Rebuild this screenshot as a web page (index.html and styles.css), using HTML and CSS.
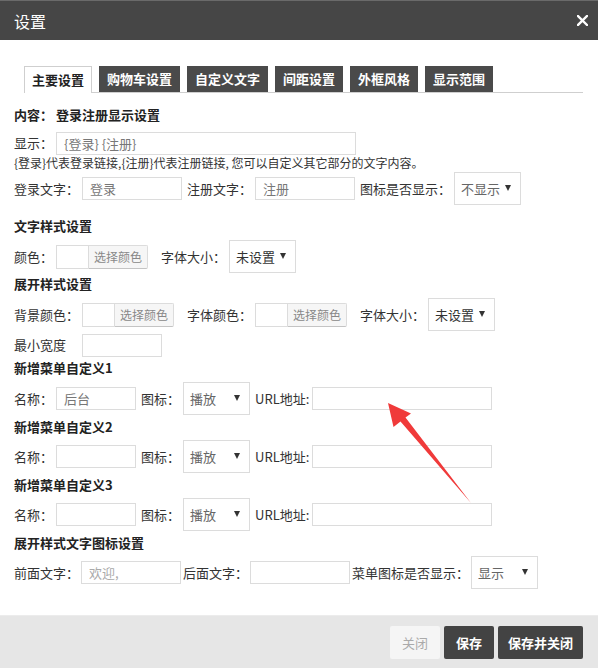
FILE: index.html
```html
<!DOCTYPE html>
<html lang="zh-CN">
<head>
  <meta charset="UTF-8" />
  <meta name="viewport" content="width=device-width, initial-scale=1.0" />
  <title>设置</title>
  <link rel="stylesheet" href="styles.css">
</head>
<body>

  <div class="dialog">
    <div class="dialog-head">
      <span class="dialog-title">设置</span>
      <svg class="close-x" width="11" height="11" viewBox="0 0 11 11">
        <path d="M1 1 L10 10 M10 1 L1 10" stroke="#fff" stroke-width="2.4" stroke-linecap="square" />
      </svg>
    </div>

    <div class="dialog-body">
      <ul class="tabs">
        <li class="tab active">主要设置</li>
        <li class="tab">购物车设置</li>
        <li class="tab">自定义文字</li>
        <li class="tab">间距设置</li>
        <li class="tab">外框风格</li>
        <li class="tab">显示范围</li>
      </ul>

      <div class="panel">
        <div class="sec-title first">内容： 登录注册显示设置</div>
        <div class="row short r-show">
          <label>显示：</label>
          <input class="field w300" type="text" value="{登录} {注册}" />
        </div>
        <div class="help">{登录}代表登录链接,{注册}代表注册链接, 您可以自定义其它部分的文字内容。</div>
        <div class="row r-login">
          <label>登录文字：</label>
          <input class="field w100" type="text" value="登录" />
          <label>注册文字：</label>
          <input class="field w100" type="text" value="注册" />
          <label>图标是否显示：</label>
          <div class="select"><span>不显示</span></div>
        </div>

        <div class="sec-title s-text">文字样式设置</div>
        <div class="row">
          <label>颜色：</label>
          <div class="color-pick"><span class="swatch"></span><span class="pick-btn">选择颜色</span></div>
          <label>字体大小：</label>
          <div class="select dark"><span>未设置</span></div>
        </div>

        <div class="sec-title s-open">展开样式设置</div>
        <div class="row">
          <label>背景颜色：</label>
          <div class="color-pick"><span class="swatch"></span><span class="pick-btn">选择颜色</span></div>
          <label>字体颜色：</label>
          <div class="color-pick"><span class="swatch"></span><span class="pick-btn">选择颜色</span></div>
          <label>字体大小：</label>
          <div class="select dark"><span>未设置</span></div>
        </div>
        <div class="row short r-min">
          <label>最小宽度</label>
          <input class="field w80 ml" type="text" value="" />
        </div>

        <div class="sec-title s-menu1">新增菜单自定义1</div>
        <div class="row">
          <label>名称：</label>
          <input class="field w80" type="text" value="后台" />
          <label>图标：</label>
          <div class="select"><span>播放</span></div>
          <label>URL地址:</label>
          <input class="field w180" type="text" value="" />
        </div>

        <div class="sec-title">新增菜单自定义2</div>
        <div class="row r-menu">
          <label>名称：</label>
          <input class="field w80" type="text" value="" />
          <label>图标：</label>
          <div class="select"><span>播放</span></div>
          <label>URL地址:</label>
          <input class="field w180" type="text" value="" />
        </div>

        <div class="sec-title">新增菜单自定义3</div>
        <div class="row r-menu">
          <label>名称：</label>
          <input class="field w80" type="text" value="" />
          <label>图标：</label>
          <div class="select"><span>播放</span></div>
          <label>URL地址:</label>
          <input class="field w180" type="text" value="" />
        </div>

        <div class="sec-title">展开样式文字图标设置</div>
        <div class="row tight r-menu">
          <label>前面文字：</label>
          <input class="field w100" type="text" placeholder="欢迎," />
          <label>后面文字：</label>
          <input class="field w100" type="text" value="" />
          <label>菜单图标是否显示：</label>
          <div class="select"><span>显示</span></div>
        </div>
      </div>

      <!-- annotation arrow pointing at the first URL field -->
      <svg class="mark-arrow" width="598" height="668" viewBox="0 0 598 668">
        <polygon points="388,403 411,413.5 405.5,417.5 471,503 400.5,421.5 393.5,427" fill="#f03a3a" />
      </svg>
    </div>

    <div class="dialog-foot">
      <button class="btn light">关闭</button>
      <button class="btn">保存</button>
      <button class="btn wide">保存并关闭</button>
    </div>
  </div>

</body>
</html>
```

FILE: styles.css
```css
* {
  box-sizing: border-box;
}

body {
  margin: 0;
  font-family: "Noto Sans CJK SC", "Noto Sans", sans-serif;
  font-size: 13px;
  color: #333;
  background: #fff;
}

.dialog {
  width: 598px;
  height: 668px;
  display: flex;
  flex-direction: column;
  position: relative;
  overflow: hidden;
}

.dialog-head {
  height: 40px;
  background: #464646;
  border-top: 1px solid #6a6a6a;
  display: flex;
  align-items: center;
  justify-content: space-between;
  padding: 0 10px 0 14px;
}

.dialog-title {
  color: #fff;
  font-size: 16px;
  line-height: 20px;
}

.close-x {
  display: block;
}

.dialog-body {
  flex: 1;
}

/* tabs */
.tabs {
  list-style: none;
  margin: 26px 15px 0 24px;
  padding: 0;
  display: flex;
  gap: 7px;
  border-bottom: 1px solid #cfcfcf;
  height: 27px;
}

.tab {
  height: 26px;
  line-height: 26px;
  padding: 0 8px;
  background: #4a4a4a;
  color: #fff;
  font-weight: bold;
}

.tab.active {
  background: #fff;
  color: #222;
  border: 1px solid #cfcfcf;
  border-bottom: none;
  height: 27px;
  padding: 0 7px;
}

/* form panel */
.panel {
  padding: 0 14px;
}

.sec-title {
  height: 20px;
  line-height: 20px;
  font-weight: bold;
  color: #222;
  margin-top: 2px;
}

.sec-title.first { margin-top: 12px; }
.sec-title.s-text { margin-top: 11px; }
.sec-title.s-open { margin-top: 1px; }
.sec-title.s-menu1 { margin-top: 1px; }

.row {
  display: flex;
  align-items: center;
  height: 33px;
  margin-top: 4px;
}

.row.short { height: 24px; }
.row.r-show { margin-top: 6px; }
.row.r-login { margin-top: 1px; }
.row.r-min { margin-top: 2px; }
.row.r-menu { margin-top: 3px; }

.row label {
  white-space: nowrap;
  line-height: 20px;
  margin-right: 3px;
}

.row .field {
  margin-right: 5px;
}

.row.tight label,
.row.tight .field {
  margin-right: 2px;
}

.help {
  font-size: 12px;
  line-height: 16px;
  color: #333;
  white-space: nowrap;
}

.field {
  height: 23px;
  border: 1px solid #dcdcdc;
  padding: 0 7px;
  font-family: inherit;
  font-size: 13px;
  color: #777;
  background: #fff;
  outline: none;
}

.field::placeholder {
  color: #aaa;
}

.w80 { width: 80px; }
.w100 { width: 100px; }
.w180 { width: 180px; }
.w300 { width: 300px; }
.ml { margin-left: 13px; }

/* fake select box */
.select {
  width: 67px;
  height: 33px;
  border: 1px solid #dcdcdc;
  display: flex;
  align-items: center;
  justify-content: space-between;
  padding: 0 9px 0 6px;
  color: #666;
  margin-right: 5px;
}

.select.dark {
  color: #333;
}

.select::after {
  content: "";
  width: 0;
  height: 0;
  border-left: 3px solid transparent;
  border-right: 3px solid transparent;
  border-top: 6px solid #333;
  margin-top: -2px;
}

/* color picker */
.color-pick {
  display: flex;
  height: 24px;
  margin-right: 13px;
}

.swatch {
  width: 32px;
  border: 1px solid #dcdcdc;
  border-right: none;
  background: #fff;
}

.pick-btn {
  width: 60px;
  border: 1px solid #dcdcdc;
  border-bottom-color: #c4c4c4;
  background: #f6f6f6;
  color: #888;
  font-size: 12px;
  line-height: 21px;
  text-align: center;
  border-radius: 0 2px 2px 0;
}

.mark-arrow {
  position: absolute;
  left: 0;
  top: 0;
  pointer-events: none;
}

/* footer */
.dialog-foot {
  height: 53px;
  background: #e6e6e6;
  border-top: 1px solid #ececec;
  display: flex;
  justify-content: flex-end;
  align-items: flex-start;
  gap: 4px;
  padding: 10px 15px 0 0;
}

.btn {
  height: 33px;
  padding: 0 12px;
  border: none;
  border-radius: 2px;
  background: #434343;
  color: #fff;
  font-family: inherit;
  font-size: 13px;
  font-weight: bold;
  cursor: pointer;
}

.btn.light {
  background: #f5f5f5;
  color: #aaa;
  font-weight: normal;
}

.btn.wide {
  padding: 0 10px;
}
```
